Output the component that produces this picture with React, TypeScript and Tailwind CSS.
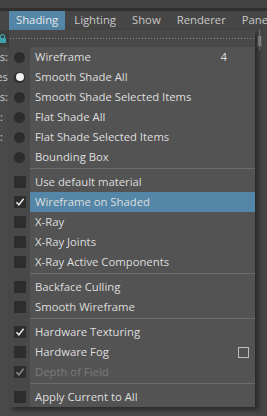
import React from 'react';

type Mark = 'radio' | 'radio-on' | 'box' | 'check' | 'check-dim';

type Row =
    | { sep: true }
    | { sep?: false; label: string; mark: Mark; hot?: boolean; disabled?: boolean; hint?: string; option?: boolean };

const rows: Row[] = [
    { label: 'Wireframe', mark: 'radio', hint: '4' },
    { label: 'Smooth Shade All', mark: 'radio-on' },
    { label: 'Smooth Shade Selected Items', mark: 'radio' },
    { label: 'Flat Shade All', mark: 'radio' },
    { label: 'Flat Shade Selected Items', mark: 'radio' },
    { label: 'Bounding Box', mark: 'radio' },
    { sep: true },
    { label: 'Use default material', mark: 'box' },
    { label: 'Wireframe on Shaded', mark: 'check', hot: true },
    { label: 'X-Ray', mark: 'box' },
    { label: 'X-Ray Joints', mark: 'box' },
    { label: 'X-Ray Active Components', mark: 'box' },
    { sep: true },
    { label: 'Backface Culling', mark: 'box' },
    { label: 'Smooth Wireframe', mark: 'box' },
    { sep: true },
    { label: 'Hardware Texturing', mark: 'check' },
    { label: 'Hardware Fog', mark: 'box', option: true },
    { label: 'Depth of Field', mark: 'check-dim', disabled: true },
    { sep: true },
    { label: 'Apply Current to All', mark: 'box' },
];

const menus = ['Shading', 'Lighting', 'Show', 'Renderer', 'Panels'];

// labels of the panel hidden behind the menu, only their last letters show
const sideLabels = [
    { text: 'Verts:', pad: 'pr-[1px]' },
    { text: 'Edges', pad: 'pr-[1px]' },
    { text: 'Faces:', pad: 'pr-[1px]' },
    { text: 'Tris:', pad: 'pr-[6px]' },
    { text: 'UVs:', pad: 'pr-[6px]' },
];

const MarkIcon: React.FC<{ mark: Mark }> = ({ mark }) => {
    if (mark === 'radio' || mark === 'radio-on') {
        return (
            <div className="w-[11px] h-[11px] rounded-full bg-[#2c2c2c] flex items-center justify-center">
                {mark === 'radio-on' && <div className="w-[8px] h-[8px] rounded-full bg-[#f2f2f2]" />}
            </div>
        );
    }
    return (
        <div className="w-[12px] h-[12px] bg-[#2d2d2d] flex items-center justify-center">
            {mark !== 'box' && (
                <svg width="12" height="12" viewBox="0 0 12 12">
                    <path d="M2.5 6.3 L4.9 8.8 L9.6 2.8" fill="none" stroke={mark === 'check' ? '#e8e8e8' : '#8a8a8a'} strokeWidth="1.5" />
                </svg>
            )}
        </div>
    );
};

const App: React.FC = () => {
    return (
        <div className="w-[267px] h-[416px] overflow-hidden bg-[#4a4a4a] text-[11.3px] font-medium" style={{ fontFamily: '"Open Sans", "DejaVu Sans", sans-serif' }}>
            <div className="h-[8px] bg-[#434343]" />
            <div className="h-[3px] bg-[#303030]" />
            <div className="h-[19px] bg-[#464646] flex items-stretch pl-[9px] gap-[2px] whitespace-nowrap">
                {menus.map((m, i) => (
                    <div key={m} className={`px-[7px] flex items-center ${i === 0 ? 'bg-[#5386a7] text-[#e6e6e6]' : 'text-[#c8c8c8]'}`}>{m}</div>
                ))}
            </div>

            <div className="relative flex h-[386px]">
                {/* panel behind the menu */}
                <div className="w-[9px] flex flex-col">
                    <div className="h-[17px] bg-[#3e3e3e] flex items-center">
                        <svg width="6" height="9" viewBox="0 0 6 9">
                            <path d="M0.5 4 V2.5 A2 2 0 0 1 4.5 2.5 V4" fill="none" stroke="#3aa3ad" strokeWidth="1.2" />
                            <rect x="-1" y="4" width="7" height="5" fill="#3aa3ad" />
                        </svg>
                    </div>
                    {sideLabels.map(l => (
                        <div key={l.text} className={`h-[20px] flex items-center justify-end overflow-hidden whitespace-nowrap text-[#cdcdcd] ${l.pad}`}>{l.text}</div>
                    ))}
                </div>
                <div className="flex-1" />
                <div className="w-[12px] bg-[#464646] flex flex-col items-start pl-[2px]">
                    <div className="w-[5px] flex flex-col items-center">
                        <div className="w-px h-[5px] bg-[#777]" />
                        <div className="w-[5px] h-[12px] bg-[#8c8c8c] border border-[#5a5a5a]" />
                        <div className="w-px h-[3px] bg-[#777]" />
                    </div>
                </div>

                {/* the Shading dropdown */}
                <div className="absolute left-[9px] top-0 w-[246px] bg-[#535353] shadow-[3px_3px_5px_rgba(0,0,0,0.45)] text-[#dedede] whitespace-nowrap">
                    <div className="h-[17px] bg-[#484848] flex items-center px-[1px]">
                        <div className="h-px w-full bg-[repeating-linear-gradient(90deg,#8e8e8e_0_1px,transparent_1px_3px)]" />
                    </div>
                    {rows.map((r, i) =>
                        r.sep ? (
                            <div key={i} className="h-[5px] flex">
                                <div className="w-[21px] bg-[#484848]" />
                                <div className="flex-1 pt-[1px]">
                                    <div className="h-px bg-[#6c6c6c]" />
                                </div>
                            </div>
                        ) : (
                            <div key={i} className="h-[20px] flex">
                                <div className="w-[21px] bg-[#484848] flex items-center justify-center">
                                    <MarkIcon mark={r.mark} />
                                </div>
                                <div className={`flex-1 flex items-center pl-[5px] ${r.hot ? 'bg-[#5386a7]' : ''} ${r.disabled ? 'text-[#7a7a7a]' : ''}`}>
                                    <span className="flex-1">{r.label}</span>
                                    {r.hint && <span className="pr-[28px]">{r.hint}</span>}
                                    {r.option && <div className="w-[11px] h-[11px] border border-[#bdbdbd] mr-[6px]" />}
                                </div>
                            </div>
                        )
                    )}
                </div>
            </div>
        </div>
    );
};

export default App;
